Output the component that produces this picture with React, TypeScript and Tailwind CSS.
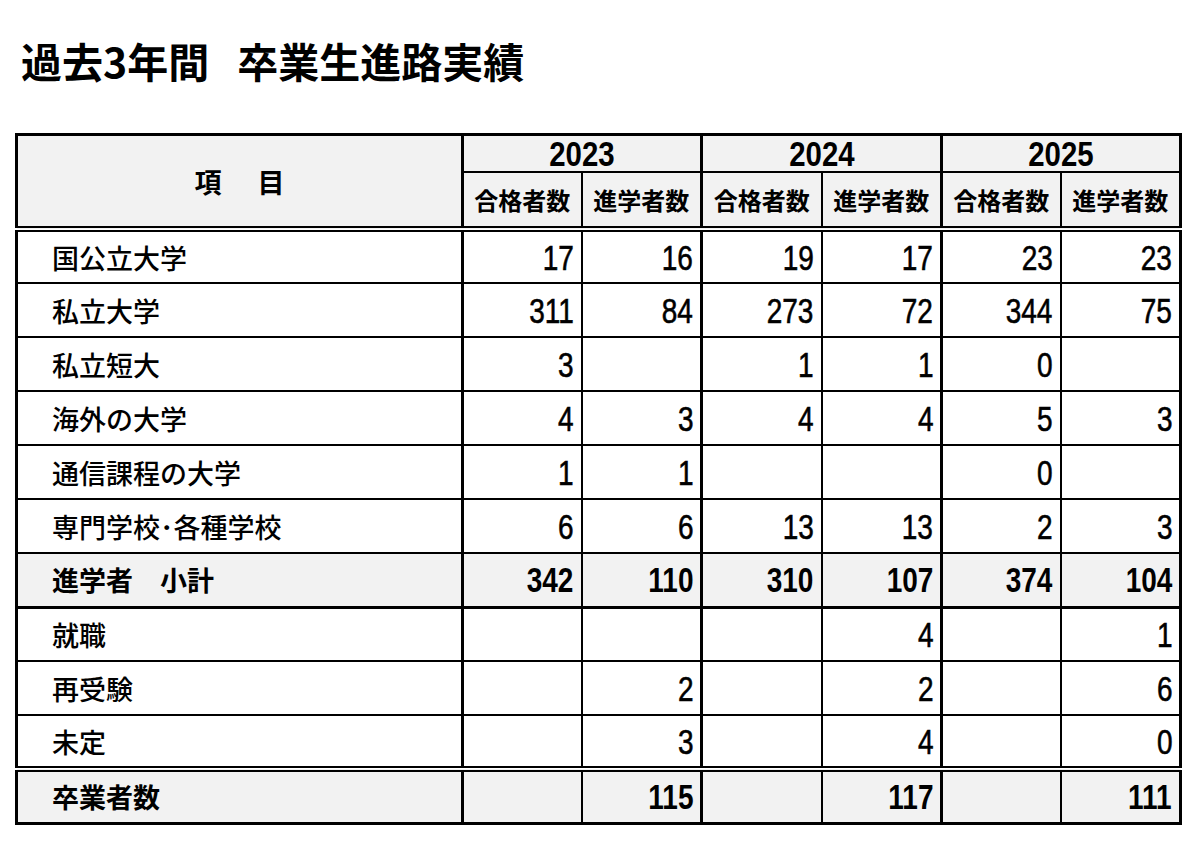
const jp = "font-['Noto_Sans_CJK_JP','Noto_Sans',sans-serif]";
const num = "font-['Liberation_Sans','Arial',sans-serif]";

type Row = {
  label: string;
  values: (number | "")[];
  kind?: "subtotal" | "total";
  bottom?: "thick" | "double";
};

const rows: Row[] = [
  { label: "国公立大学", values: [17, 16, 19, 17, 23, 23] },
  { label: "私立大学", values: [311, 84, 273, 72, 344, 75] },
  { label: "私立短大", values: [3, "", 1, 1, 0, ""] },
  { label: "海外の大学", values: [4, 3, 4, 4, 5, 3] },
  { label: "通信課程の大学", values: [1, 1, "", "", 0, ""] },
  { label: "専門学校･各種学校", values: [6, 6, 13, 13, 2, 3] },
  { label: "進学者　小計", values: [342, 110, 310, 107, 374, 104], kind: "subtotal", bottom: "thick" },
  { label: "就職", values: ["", "", "", 4, "", 1] },
  { label: "再受験", values: ["", 2, "", 2, "", 6] },
  { label: "未定", values: ["", 3, "", 4, "", 0], bottom: "double" },
  { label: "卒業者数", values: ["", 115, "", 117, "", 111], kind: "total" },
];

const years = ["2023", "2024", "2025"];
const colWidths = [446, 119, 120, 120, 120, 119, 120];

function bottomClass(bottom?: Row["bottom"]) {
  if (bottom === "thick") return "border-b-[3px]";
  if (bottom === "double") return "border-b-[6px] [border-bottom-style:double]";
  return "";
}

export default function App() {
  return (
    <div className={`w-[1200px] h-[842px] bg-white text-black ${jp}`}>
      <div className="pt-[40px] pl-[21px] text-[41px] leading-[41px] font-bold">
        過去3年間<span className="ml-[28px]">卒業生進路実績</span>
      </div>

      <table className="mt-[52px] ml-[15px] w-[1164px] table-fixed border-collapse border-[3px] border-black">
        <colgroup>
          {colWidths.map((w, i) => (
            <col key={i} style={{ width: w }} />
          ))}
        </colgroup>
        <thead>
          <tr className="bg-[#f2f2f2]">
            <th
              rowSpan={2}
              className="border-2 border-r-[3px] border-b-[6px] [border-bottom-style:double] border-black p-0 align-middle"
            >
              <div className="flex justify-center gap-[36px] text-[27px] leading-none font-bold">
                <span>項</span>
                <span>目</span>
              </div>
            </th>
            {years.map((y) => (
              <th
                key={y}
                colSpan={2}
                className="h-[37px] border-2 border-r-[3px] border-black p-0 align-middle"
              >
                <span className={`${num} inline-block scale-x-[0.84] text-[35px] leading-none font-bold`}>
                  {y}
                </span>
              </th>
            ))}
          </tr>
          <tr className="bg-[#f2f2f2]">
            {years.map((y) => (
              <>
                <th
                  key={y + "a"}
                  className="h-[57px] border-2 border-b-[6px] [border-bottom-style:double] border-black p-0 align-middle text-[24px] leading-none font-bold"
                >
                  合格者数
                </th>
                <th
                  key={y + "b"}
                  className="border-2 border-r-[3px] border-b-[6px] [border-bottom-style:double] border-black p-0 align-middle text-[24px] leading-none font-bold"
                >
                  進学者数
                </th>
              </>
            ))}
          </tr>
        </thead>
        <tbody>
          {rows.map((r) => {
            const gray = r.kind ? "bg-[#f2f2f2]" : "";
            const weight = r.kind ? "font-bold" : "font-medium";
            const b = bottomClass(r.bottom);
            return (
              <tr key={r.label} className={gray}>
                <td
                  className={`h-[54px] border-2 border-r-[3px] border-black p-0 pl-[34px] align-middle text-[27px] leading-none ${weight} ${b}`}
                >
                  {r.label}
                </td>
                {r.values.map((v, i) => (
                  <td
                    key={i}
                    className={`border-2 border-black p-0 pr-[7px] text-right align-middle ${
                      i % 2 === 1 ? "border-r-[3px]" : ""
                    } ${b}`}
                  >
                    <span
                      className={`${num} inline-block origin-right scale-x-[0.8] text-[35px] leading-none ${
                        r.kind ? "font-bold" : "[-webkit-text-stroke:0.6px_black]"
                      }`}
                    >
                      {v}
                    </span>
                  </td>
                ))}
              </tr>
            );
          })}
        </tbody>
      </table>
    </div>
  );
}
